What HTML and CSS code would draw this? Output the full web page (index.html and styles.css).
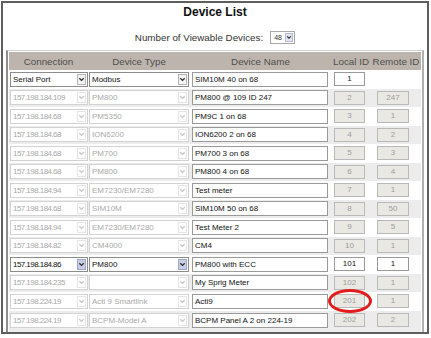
FILE: index.html
```html
<!DOCTYPE html>
<html lang="en">
<head>
  <meta charset="UTF-8" />
  <title>Device List</title>
  <link rel="stylesheet" href="styles.css">
</head>
<body>
<div class="frame">
  <h1 class="title">Device List</h1>

  <div class="count">
    <span>Number of Viewable Devices:</span>
    <div class="mini-sel">48<span class="arrow"><svg viewBox="0 0 8 8"><path d="M1.5 2.5 L4 5 L6.5 2.5"/></svg></span></div>
  </div>

  <div class="devices">
    <div class="row head">
      <div>Connection</div>
      <div>Device Type</div>
      <div>Device Name</div>
      <div>Local ID</div>
      <div>Remote ID</div>
    </div>

    <div class="row">
      <div class="sel c1 serial">Serial Port<span class="arrow"><svg viewBox="0 0 8 8"><path d="M1.5 2.5 L4 5 L6.5 2.5"/></svg></span></div>
      <div class="sel c2">Modbus<span class="arrow"><svg viewBox="0 0 8 8"><path d="M1.5 2.5 L4 5 L6.5 2.5"/></svg></span></div>
      <div class="txt">SIM10M 40 on 68</div>
      <div class="idbox local">1</div>
      <div></div>
    </div>

    <div class="row alt">
      <div class="sel c1 off">157.198.184.109<span class="arrow"><svg viewBox="0 0 8 8"><path d="M1.5 2.5 L4 5 L6.5 2.5"/></svg></span></div>
      <div class="sel c2 off">PM800<span class="arrow"><svg viewBox="0 0 8 8"><path d="M1.5 2.5 L4 5 L6.5 2.5"/></svg></span></div>
      <div class="txt">PM800 @ 109 ID 247</div>
      <div class="idbox local off">2</div>
      <div class="idbox remote off">247</div>
    </div>

    <div class="row">
      <div class="sel c1 off">157.198.184.68<span class="arrow"><svg viewBox="0 0 8 8"><path d="M1.5 2.5 L4 5 L6.5 2.5"/></svg></span></div>
      <div class="sel c2 off">PM5350<span class="arrow"><svg viewBox="0 0 8 8"><path d="M1.5 2.5 L4 5 L6.5 2.5"/></svg></span></div>
      <div class="txt">PM9C 1 on 68</div>
      <div class="idbox local off">3</div>
      <div class="idbox remote off">1</div>
    </div>

    <div class="row alt">
      <div class="sel c1 off">157.198.184.68<span class="arrow"><svg viewBox="0 0 8 8"><path d="M1.5 2.5 L4 5 L6.5 2.5"/></svg></span></div>
      <div class="sel c2 off">ION6200<span class="arrow"><svg viewBox="0 0 8 8"><path d="M1.5 2.5 L4 5 L6.5 2.5"/></svg></span></div>
      <div class="txt">ION6200 2 on 68</div>
      <div class="idbox local off">4</div>
      <div class="idbox remote off">2</div>
    </div>

    <div class="row">
      <div class="sel c1 off">157.198.184.68<span class="arrow"><svg viewBox="0 0 8 8"><path d="M1.5 2.5 L4 5 L6.5 2.5"/></svg></span></div>
      <div class="sel c2 off">PM700<span class="arrow"><svg viewBox="0 0 8 8"><path d="M1.5 2.5 L4 5 L6.5 2.5"/></svg></span></div>
      <div class="txt">PM700 3 on 68</div>
      <div class="idbox local off">5</div>
      <div class="idbox remote off">3</div>
    </div>

    <div class="row alt">
      <div class="sel c1 off">157.198.184.68<span class="arrow"><svg viewBox="0 0 8 8"><path d="M1.5 2.5 L4 5 L6.5 2.5"/></svg></span></div>
      <div class="sel c2 off">PM800<span class="arrow"><svg viewBox="0 0 8 8"><path d="M1.5 2.5 L4 5 L6.5 2.5"/></svg></span></div>
      <div class="txt">PM800 4 on 68</div>
      <div class="idbox local off">6</div>
      <div class="idbox remote off">4</div>
    </div>

    <div class="row">
      <div class="sel c1 off">157.198.184.94<span class="arrow"><svg viewBox="0 0 8 8"><path d="M1.5 2.5 L4 5 L6.5 2.5"/></svg></span></div>
      <div class="sel c2 off">EM7230/EM7280<span class="arrow"><svg viewBox="0 0 8 8"><path d="M1.5 2.5 L4 5 L6.5 2.5"/></svg></span></div>
      <div class="txt">Test meter</div>
      <div class="idbox local off">7</div>
      <div class="idbox remote off">1</div>
    </div>

    <div class="row alt">
      <div class="sel c1 off">157.198.184.68<span class="arrow"><svg viewBox="0 0 8 8"><path d="M1.5 2.5 L4 5 L6.5 2.5"/></svg></span></div>
      <div class="sel c2 off">SIM10M<span class="arrow"><svg viewBox="0 0 8 8"><path d="M1.5 2.5 L4 5 L6.5 2.5"/></svg></span></div>
      <div class="txt">SIM10M 50 on 68</div>
      <div class="idbox local off">8</div>
      <div class="idbox remote off">50</div>
    </div>

    <div class="row">
      <div class="sel c1 off">157.198.184.94<span class="arrow"><svg viewBox="0 0 8 8"><path d="M1.5 2.5 L4 5 L6.5 2.5"/></svg></span></div>
      <div class="sel c2 off">EM7230/EM7280<span class="arrow"><svg viewBox="0 0 8 8"><path d="M1.5 2.5 L4 5 L6.5 2.5"/></svg></span></div>
      <div class="txt">Test Meter 2</div>
      <div class="idbox local off">9</div>
      <div class="idbox remote off">5</div>
    </div>

    <div class="row alt">
      <div class="sel c1 off">157.198.184.82<span class="arrow"><svg viewBox="0 0 8 8"><path d="M1.5 2.5 L4 5 L6.5 2.5"/></svg></span></div>
      <div class="sel c2 off">CM4000<span class="arrow"><svg viewBox="0 0 8 8"><path d="M1.5 2.5 L4 5 L6.5 2.5"/></svg></span></div>
      <div class="txt">CM4</div>
      <div class="idbox local off">10</div>
      <div class="idbox remote off">1</div>
    </div>

    <div class="row">
      <div class="sel c1 hot">157.198.184.86<span class="arrow"><svg viewBox="0 0 8 8"><path d="M1.5 2.5 L4 5 L6.5 2.5"/></svg></span></div>
      <div class="sel c2 hot">PM800<span class="arrow"><svg viewBox="0 0 8 8"><path d="M1.5 2.5 L4 5 L6.5 2.5"/></svg></span></div>
      <div class="txt">PM800 with ECC</div>
      <div class="idbox local">101</div>
      <div class="idbox remote">1</div>
    </div>

    <div class="row alt">
      <div class="sel c1 off">157.198.184.235<span class="arrow"><svg viewBox="0 0 8 8"><path d="M1.5 2.5 L4 5 L6.5 2.5"/></svg></span></div>
      <div class="sel c2 off"><span class="arrow"><svg viewBox="0 0 8 8"><path d="M1.5 2.5 L4 5 L6.5 2.5"/></svg></span></div>
      <div class="txt">My Sprig Meter</div>
      <div class="idbox local off">102</div>
      <div class="idbox remote off">1</div>
    </div>

    <div class="row">
      <div class="sel c1 off">157.198.224.19<span class="arrow"><svg viewBox="0 0 8 8"><path d="M1.5 2.5 L4 5 L6.5 2.5"/></svg></span></div>
      <div class="sel c2 off">Acti 9 Smartlink<span class="arrow"><svg viewBox="0 0 8 8"><path d="M1.5 2.5 L4 5 L6.5 2.5"/></svg></span></div>
      <div class="txt">Acti9</div>
      <div class="idbox local off marked">201</div>
      <div class="idbox remote off">1</div>
    </div>

    <div class="row alt last">
      <div class="sel c1 off">157.198.224.19<span class="arrow"><svg viewBox="0 0 8 8"><path d="M1.5 2.5 L4 5 L6.5 2.5"/></svg></span></div>
      <div class="sel c2 off">BCPM-Model A<span class="arrow"><svg viewBox="0 0 8 8"><path d="M1.5 2.5 L4 5 L6.5 2.5"/></svg></span></div>
      <div class="txt">BCPM Panel A 2 on 224-19</div>
      <div class="idbox local off">202</div>
      <div class="idbox remote off">2</div>
    </div>
  </div>
</div>
</body>
</html>
```

FILE: styles.css
```css
body {
  margin: 0;
  background: #fff;
  font-family: 'Liberation Sans', Arial, sans-serif;
  color: #222;
}

.frame {
  margin: 1px 0 0 1px;
  width: 424px;
  height: 329px;
  border: 2px solid #5e5e5e;
  overflow: hidden;
  background: #fff;
}

.title {
  margin: 2px 0 0;
  font-size: 12px;
  line-height: 14px;
  text-align: center;
  color: #111;
}

.count {
  display: flex;
  justify-content: center;
  align-items: center;
  gap: 7px;
  margin-top: 12px;
  height: 13px;
  font-size: 9.8px;
  color: #333;
}

.mini-sel {
  position: relative;
  width: 20px;
  height: 11px;
  border: 1px solid #a8a8a8;
  font-size: 7px;
  line-height: 11px;
  padding-left: 3px;
}

.mini-sel .arrow {
  top: 1px;
  right: 1px;
  width: 8px;
  height: 9px;
  background: #dfe3f2;
  border-color: #b8bed6;
}

.devices {
  margin: 6px 0 0 3px;
  width: 412px;
  border-top: 1px solid #d2d2d2;
  border-left: 2px solid #8e8e8e;
  border-right: 2px solid #b0b0b0;
  padding: 1px 1px 0 1px;
}

.row {
  display: grid;
  grid-template-columns: 79px 102px 141px 40px 50px;
  align-items: center;
  height: 18.5px;
  font-size: 8px;
}

.row.alt {
  background: #ececec;
}

.row.last {
  height: 21px;
  align-items: start;
  padding-top: 2px;
  box-sizing: border-box;
}

.row.head {
  height: 18px;
  background: #bdb5ad;
  font-size: 9.8px;
  color: #4e4e4e;
  text-align: center;
}

.sel {
  position: relative;
  height: 13px;
  line-height: 13px;
  border: 1px solid #8c8c8c;
  background: #fff;
  padding-left: 2px;
  white-space: nowrap;
  overflow: hidden;
  color: #111;
}

.sel.c1 {
  margin-left: 1px;
  width: 74px;
  letter-spacing: -0.55px;
}

.sel.c1.serial {
  letter-spacing: 0;
}

.sel.c2 {
  margin-left: 1px;
  width: 96px;
}

.sel.off {
  border-color: #d2d2d2;
  color: #a9a9a9;
}

.arrow {
  position: absolute;
  top: 1px;
  right: 1px;
  width: 9px;
  height: 11px;
  border: 1px solid #b4b4b4;
  box-sizing: border-box;
  background: #f4f4f4;
  display: flex;
  align-items: center;
  justify-content: center;
}

.arrow svg {
  width: 7px;
  height: 7px;
  fill: none;
  stroke: #333;
  stroke-width: 1.6;
}

.sel.off .arrow {
  background: #fff;
  border-color: #e6e6e6;
}

.sel.off .arrow svg {
  stroke: #c8c8c8;
}

.sel.hot .arrow {
  background: #c9cde6;
  border-color: #9ea6cc;
}

.txt {
  margin-left: 2px;
  width: 132px;
  height: 13px;
  line-height: 13px;
  border: 1px solid #9a9a9a;
  background: #fff;
  padding-left: 2px;
  white-space: nowrap;
  overflow: hidden;
  color: #111;
}

.idbox {
  position: relative;
  height: 12px;
  line-height: 12px;
  border: 1px solid #9a9a9a;
  background: #fff;
  text-align: center;
  color: #111;
}

.idbox.local {
  margin-left: 3px;
  width: 29px;
}

.idbox.remote {
  margin-left: 6px;
  width: 30px;
}

.idbox.off {
  background: #e9e8e2;
  border-color: #b9b9b9;
  color: #9d9d9d;
}

.idbox.marked::after {
  content: "";
  position: absolute;
  left: -7px;
  top: -6px;
  width: 38px;
  height: 18px;
  border: 3px solid #e21b1b;
  border-radius: 50%;
}
```
